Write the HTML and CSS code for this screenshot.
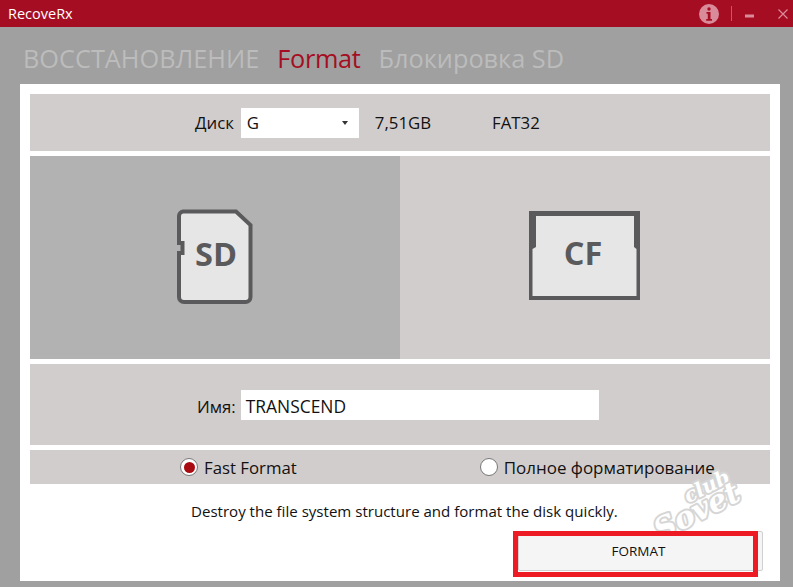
FILE: index.html
```html
<!DOCTYPE html>
<html lang="ru">
<head>
<meta charset="utf-8">
<title>RecoveRx</title>
<link rel="stylesheet" href="styles.css">
</head>
<body>
<header class="titlebar">
  <span class="app-name">RecoveRx</span>
  <div class="win-controls">
    <svg class="ico-info" width="20" height="20" viewBox="0 0 20 20"><circle cx="10" cy="10" r="10" fill="#d98b9a"/><circle cx="10" cy="5" r="1.7" fill="#a50e22"/><path d="M7.5 8h4v7h1.5v1.8H7.2V15h1.6V9.7H7.5z" fill="#a50e22"/></svg>
    <span class="sep"></span>
    <svg class="ico-min" width="9" height="4" viewBox="0 0 9 4"><rect width="9" height="3" y="0.5" fill="#d98b9a"/></svg>
    <svg class="ico-close" width="10" height="10" viewBox="0 0 10 10"><path d="M.5.5l9 9M9.500.5l-9 9" stroke="#d98b9a" stroke-width="1.200"/></svg>
  </div>
</header>
<nav class="tabs">
  <span class="tab">ВОССТАНОВЛЕНИЕ</span>
  <span class="tab active">Format</span>
  <span class="tab">Блокировка SD</span>
</nav>
<main class="panel">
  <section class="row row-disk">
    <span class="lbl">Диск</span>
    <div class="select"><span>G</span><i class="caret"></i></div>
    <span class="val val-size">7,51GB</span>
    <span class="val val-fs">FAT32</span>
  </section>
  <section class="cards">
    <div class="card card-on">
      <svg width="76" height="96" viewBox="0 0 76 96">
        <path d="M6 2.500H59L73.500 16V88a5 5 0 0 1-5 5H7a5 5 0 0 1-5-5V44H5.500V34H2V7a4.500 4.500 0 0 1 4-4.500z" fill="#e6e6e6" stroke="#5a5a5c" stroke-width="4"/>
        <text x="39" y="56.500" class="card-text" text-anchor="middle">SD</text>
      </svg>
    </div>
    <div class="card card-cf">
      <svg width="112" height="90" viewBox="0 0 112 90">
        <path d="M0 0H111V89H0z" fill="#5a5a5c"/>
        <path d="M7 5H105V36L107.500 38V85H3.500V38L7 36z" fill="#e6e6e6"/>
        <text x="54" y="54" class="card-text" text-anchor="middle">CF</text>
      </svg>
    </div>
  </section>
  <section class="row row-name">
    <span class="lbl">Имя:</span>
    <div class="name-input">TRANSCEND</div>
  </section>
  <section class="row row-radio">
    <div class="radio-item radio-a"><span class="radio checked"></span>Fast Format</div>
    <div class="radio-item radio-b"><span class="radio"></span>Полное форматирование</div>
  </section>
  <p class="desc">Destroy the file system structure and format the disk quickly.</p>
  <svg class="watermark" width="140" height="90" viewBox="0 0 140 90">
    <g transform="translate(-18 -13) rotate(-27 70 45)">
      <text x="58" y="47" class="wm-club">club</text>
      <text x="16" y="68" class="wm-sovet">Sovet</text>
    </g>
  </svg>
  <div class="actions">
    <button class="btn">FORMAT</button>
    <span class="highlight"></span>
  </div>
</main>
</body>
</html>
```
FILE: styles.css
```css
* { box-sizing: border-box; }
html, body { margin: 0; height: 100%; }
body {
  width: 793px; height: 587px; overflow: hidden;
  background: #a0a0a0;
  font-family: "Open Sans", "Noto Sans", sans-serif;
  color: #111;
  display: flex; flex-direction: column;
}
.titlebar {
  height: 27px; background: #a50e22; color: #fff;
  display: flex; align-items: center; justify-content: space-between;
  padding: 0 5px 0 8px; flex: none;
}
.app-name { font-size: 14.500px; margin-top: -1px; }
.win-controls { display: flex; align-items: center; }
.sep { width: 1px; height: 15px; background: #c4596b; margin: 0 0 0 12px; }
.ico-min { margin: 4px 0 0 13px; }
.ico-close { margin: 0 0 0 24px; }
.tabs {
  height: 57px; flex: none; padding: 0 0 0 23px;
  display: flex; align-items: center; gap: 18px;
  font-size: 25.300px; color: #bcbcbc;
}
.tab { white-space: nowrap; line-height: 1; margin-top: 6px; }
.tab.active { color: #a50e22; letter-spacing: -.3px; }
.panel {
  position: relative;
  width: 760px; height: 497px; margin-left: 20px;
  background: #fff; padding: 10px;
  display: flex; flex-direction: column; gap: 5px;
}
.row { background: #d2cdcd; display: flex; align-items: center; font-size: 16.800px; flex: none; }
.row-disk { height: 57px; padding-left: 165px; }
.lbl { white-space: nowrap; }
.select {
  width: 118px; height: 30px; background: #fff; margin-left: 7px;
  display: flex; align-items: center; justify-content: space-between;
  padding: 0 11px 0 6px;
}
.caret { width: 0; height: 0; border: 3px solid transparent; border-top: 4px solid #333; border-bottom: 0; }
.val-size { margin-left: 16px; }
.val-fs { margin-left: 61px; }
.cards { height: 203px; display: flex; flex: none; }
.card { flex: 1; background: #d2cdcd; display: flex; align-items: center; justify-content: center; }
.card-on { background: #b2b2b2; }
.card-on svg { margin: -2px 0 0 -1px; }
.card-cf svg { margin-top: -3px; }
.card svg { display: block; }
.card-text { font: 700 32.500px "Open Sans", sans-serif; fill: #5a5a5c; }
.row-name { height: 81px; padding: 1px 0 0 167px; }
.row-name .lbl { margin-top: 3px; }
.name-input {
  width: 358px; height: 30px; background: #fff; margin-left: 5px;
  padding-left: 5px; line-height: 33px; font-size: 17.400px;
}
.row-radio { height: 34px; }
.radio-item { display: flex; align-items: center; gap: 6px; white-space: nowrap; }
.radio-a { margin-left: 150px; }
.radio-b { margin-left: 183px; font-size: 16.950px; }
.radio {
  width: 18px; height: 18px; border-radius: 50%; background: #fff;
  border: 1px solid #777; display: flex; align-items: center; justify-content: center;
}
.radio.checked::after { content: ""; width: 11px; height: 11px; border-radius: 50%; background: #a80c12; }
.desc { margin: 8px 0 0; font-size: 15.070px; line-height: 28px; padding-left: 161px; height: 28px; white-space: nowrap; flex: none; }
.actions { position: relative; flex: none; height: 46px; margin: 1px 0 0 0; }
.btn {
  position: absolute; left: 488px; top: 0; width: 245px; height: 40px;
  background: #f5f5f5; border: 1px solid #d0d0d0; border-radius: 2px;
  font: 13.500px "Open Sans", sans-serif; color: #111; padding: 0 4px 0 0;
}
.highlight { position: absolute; left: 483px; top: 0; width: 245px; height: 46px; border: 5px solid #ed1c24; pointer-events: none; }
.watermark { position: absolute; left: 626px; top: 380px; }
.wm-club, .wm-sovet {
  font-family: "DejaVu Serif", serif; font-style: italic; font-weight: 700;
  fill: #fff; stroke: #d6d6d6; stroke-width: 4px; paint-order: stroke; stroke-linejoin: round;
}
.wm-club { font-size: 20px; }
.wm-sovet { font-size: 30px; }
```
